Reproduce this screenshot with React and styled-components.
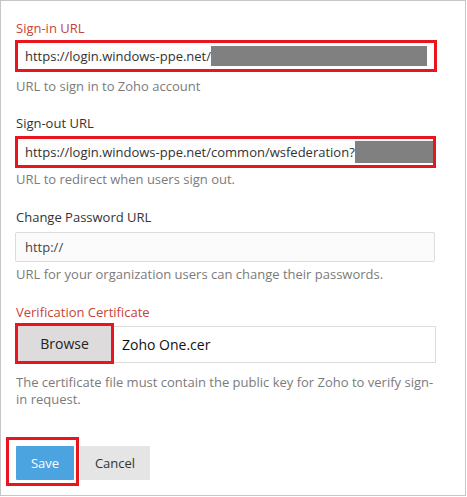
import React from 'react';
import styled, { createGlobalStyle } from 'styled-components';

const GlobalStyle = createGlobalStyle`
  body {
    margin: 0;
    background: #ffffff;
    font-family: "Open Sans", "Noto Sans", sans-serif;
  }
`;

export default function App() {
  return (
    <>
      <GlobalStyle />
      <Panel>
        <Group $mb={19}>
          <Label $accent $gap={3}>Sign-in URL</Label>
          <Marked $w={422}>
            <UrlText>https://login.windows-ppe.net/</UrlText>
            <Redacted $h={20} $mr={7} />
          </Marked>
          <Hint $gap={6}>URL to sign in to Zoho account</Hint>
        </Group>

        <Group $mb={20}>
          <Label $gap={4}>Sign-out URL</Label>
          <Marked $w={421}>
            <UrlText>https://login.windows-ppe.net/common/wsfederation?</UrlText>
            <Redacted $h={22} $mr={0} />
          </Marked>
          <Hint $gap={3}>URL to redirect when users sign out.</Hint>
        </Group>

        <Group $mb={20}>
          <Label $gap={6}>Change Password URL</Label>
          <TextInput readOnly value="http://" />
          <Hint $gap={4}>URL for your organization users can change their passwords.</Hint>
        </Group>

        <Group $mb={0}>
          <Label $accent $gap={2}>Verification Certificate</Label>
          <FileRow>
            <BrowseButton>Browse</BrowseButton>
            <FileName>Zoho One.cer</FileName>
          </FileRow>
          <Hint $gap={10}>
            The certificate file must contain the public key for Zoho to verify sign-in request.
          </Hint>
        </Group>

        <Actions>
          <SaveFrame>
            <SaveButton>Save</SaveButton>
          </SaveFrame>
          <CancelButton>Cancel</CancelButton>
        </Actions>
      </Panel>
    </>
  );
}

const Panel = styled.div`
  box-sizing: border-box;
  width: 466px;
  height: 496px;
  border: 1px solid #c6c6c6;
  padding: 18px 29px 0 14px;
`;

const Group = styled.div`
  width: 420px;
  margin-bottom: ${(p) => p.$mb}px;
`;

const Label = styled.div`
  font-size: 13px;
  line-height: 18px;
  color: ${(p) => (p.$accent ? '#c8433a' : '#333333')};
  margin-bottom: ${(p) => p.$gap}px;
  padding-left: 1px;
`;

const Hint = styled.div`
  font-size: 13px;
  line-height: 17px;
  color: #7b7b7b;
  margin-top: ${(p) => p.$gap}px;
  padding-left: 1px;
`;

const Marked = styled.div`
  box-sizing: border-box;
  display: flex;
  align-items: center;
  width: ${(p) => p.$w}px;
  height: 32px;
  border: 3px solid #e8151f;
  background: #fdfdfd;
  padding-left: 7px;
`;

const UrlText = styled.span`
  font-size: 13px;
  color: #333333;
  white-space: nowrap;
`;

const Redacted = styled.span`
  flex: 1;
  height: ${(p) => p.$h}px;
  margin-right: ${(p) => p.$mr}px;
  background: #808080;
`;

const TextInput = styled.input`
  box-sizing: border-box;
  display: block;
  width: 420px;
  height: 30px;
  margin: 0;
  border: 1px solid #dcdcdc;
  border-radius: 2px;
  background: #fbfbfb;
  padding: 0 0 0 9px;
  font-family: "Open Sans", "Noto Sans", sans-serif;
  font-size: 13px;
  color: #444444;
  outline: none;
`;

const FileRow = styled.div`
  display: flex;
  align-items: flex-start;
  width: 421px;
`;

const BrowseButton = styled.div`
  box-sizing: border-box;
  display: flex;
  align-items: center;
  justify-content: center;
  width: 99px;
  height: 41px;
  border: 3px solid #e8151f;
  background: #dddbdc;
  font-size: 14px;
  color: #222222;
`;

const FileName = styled.div`
  box-sizing: border-box;
  flex: 1;
  display: flex;
  align-items: center;
  height: 37px;
  margin-top: 3px;
  border: 1px solid #dcdcdc;
  border-left: none;
  padding-left: 8px;
  font-size: 14px;
  color: #111111;
`;

const Actions = styled.div`
  display: flex;
  align-items: flex-start;
  margin: 29px 0 0 -9px;
`;

const SaveFrame = styled.div`
  border: 3px solid #e8151f;
  padding: 6px 2px 3px 7px;
`;

const SaveButton = styled.button`
  display: block;
  width: 58px;
  height: 34px;
  border: none;
  border-radius: 1px;
  background: #4ba3df;
  color: #ffffff;
  font-family: "Open Sans", "Noto Sans", sans-serif;
  font-size: 13px;
  padding: 0;
`;

const CancelButton = styled.button`
  width: 70px;
  height: 34px;
  margin: 9px 0 0 1px;
  border: none;
  background: #e5e5e5;
  color: #333333;
  font-family: "Open Sans", "Noto Sans", sans-serif;
  font-size: 13px;
  padding: 0;
`;
